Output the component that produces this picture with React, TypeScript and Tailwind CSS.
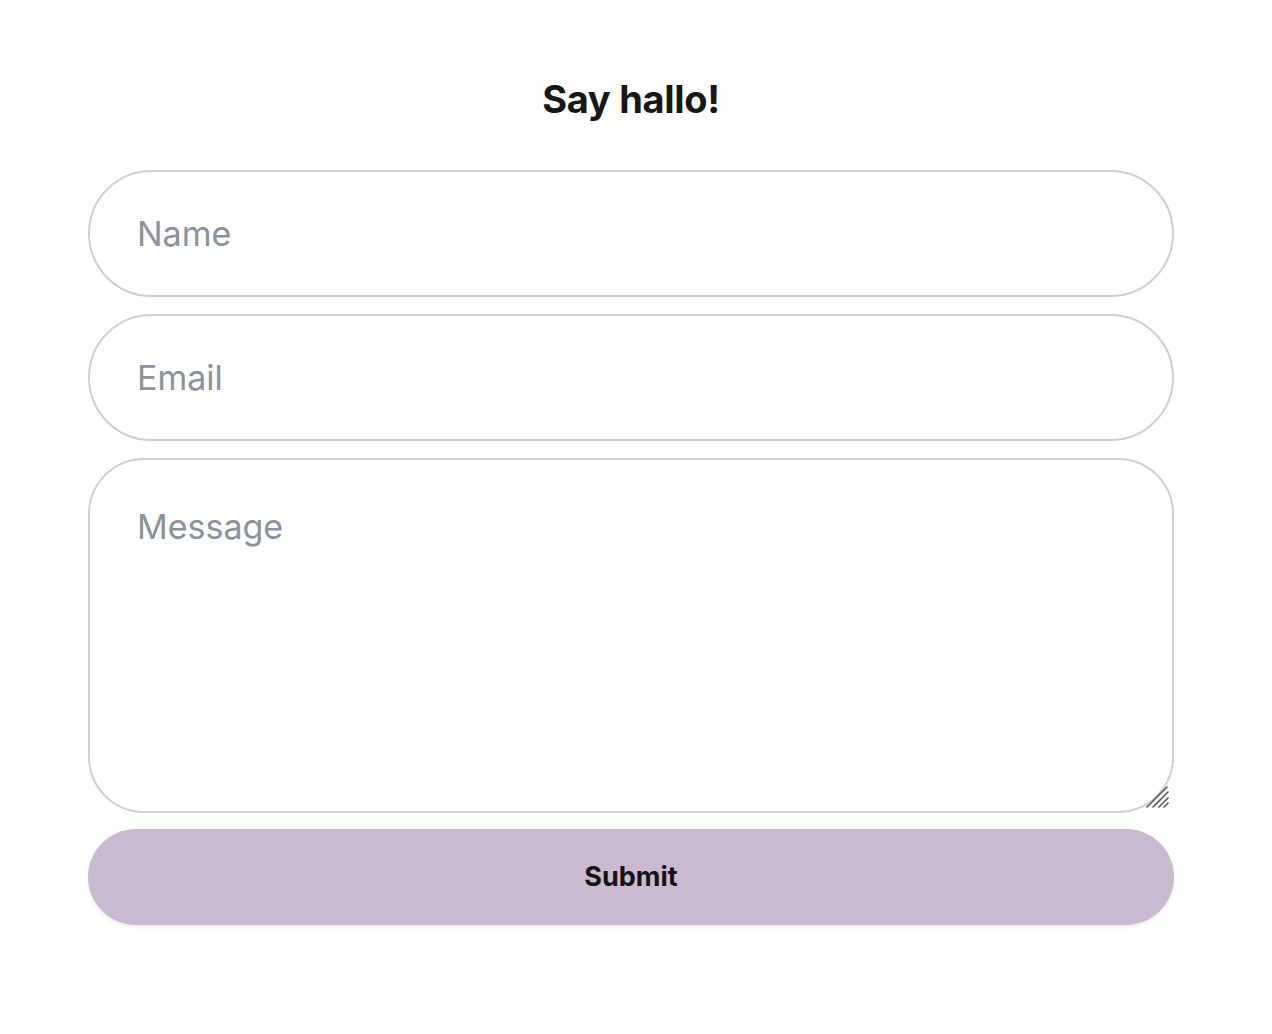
import { useState } from 'react';

const FIELD =
  'w-full rounded-full border-2 border-[#d0d0d0] bg-white px-[47px] text-[34px] text-[#1a1a1a] placeholder:text-[#8b939e] outline-none';

export default function App() {
  const [form, setForm] = useState({ name: '', email: '', message: '' });

  return (
    <div
      className="min-h-screen bg-white pt-[77px]"
      style={{ fontFamily: 'Inter, "Noto Sans", sans-serif' }}
    >
      <div className="ml-[88px] w-[1086px]">
        <h1 className="text-center text-[38px] font-bold leading-[44px] tracking-[-0.3px] text-[#171717]">
          Say hallo!
        </h1>

        <form className="mt-[49px] flex flex-col" onSubmit={e => e.preventDefault()}>
          <input
            className={`${FIELD} h-[127px]`}
            placeholder="Name"
            value={form.name}
            onChange={e => setForm({ ...form, name: e.target.value })}
          />
          <input
            className={`${FIELD} mt-[17px] h-[127px]`}
            placeholder="Email"
            value={form.email}
            onChange={e => setForm({ ...form, email: e.target.value })}
          />
          <div className="relative mt-[17px]">
            <textarea
              className="block h-[355px] w-full resize-none rounded-[56px] border-2 border-[#d0d0d0] bg-white px-[47px] pt-[47px] text-[34px] leading-[40px] text-[#1a1a1a] placeholder:text-[#8b939e] outline-none"
              placeholder="Message"
              value={form.message}
              onChange={e => setForm({ ...form, message: e.target.value })}
            />
            <svg
              className="pointer-events-none absolute bottom-[3px] right-[3px]"
              width="26"
              height="26"
              viewBox="0 0 26 26"
              stroke="#5a5a5a"
              strokeWidth="1.7"
              strokeLinecap="round"
            >
              <line x1="2" y1="23" x2="22" y2="3" />
              <line x1="8" y1="23" x2="23" y2="8" />
              <line x1="14" y1="23" x2="23" y2="14" />
              <line x1="19" y1="23" x2="23" y2="19" />
            </svg>
          </div>
          <button
            type="submit"
            className="mt-[16px] h-[96px] w-full rounded-full bg-[#cbb9d0] text-[27px] font-bold text-[#141414] shadow-[0_2px_4px_rgba(0,0,0,0.08)]"
          >
            Submit
          </button>
        </form>
      </div>
    </div>
  );
}
